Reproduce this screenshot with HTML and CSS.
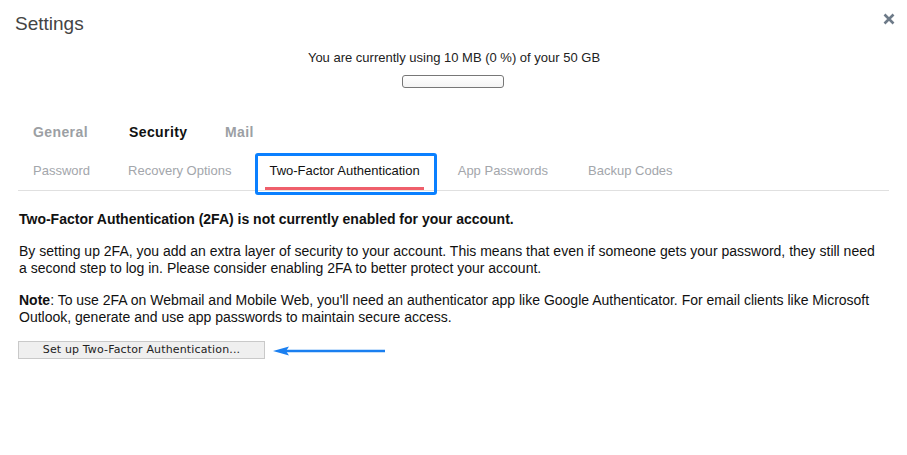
FILE: index.html
```html
<!DOCTYPE html>
<html lang="en">
<head>
<meta charset="utf-8">
<title>Settings</title>
<link rel="stylesheet" href="styles.css">
</head>
<body>
<div class="dialog">
  <header class="header">
    <h1 class="title">Settings</h1>
    <button class="close" aria-label="Close">
      <svg width="12" height="12" viewBox="0 0 12 12"><path d="M1.5 1.5 L10.5 10.5 M10.5 1.5 L1.5 10.5" stroke="#6d7a88" stroke-width="2.6" stroke-linecap="butt" fill="none"/></svg>
    </button>
  </header>

  <section class="usage">
    <div class="usage-text">You are currently using 10 MB (0 %) of your 50 GB</div>
    <div class="usage-bar"></div>
  </section>

  <nav class="tabs">
    <span class="tab">General</span>
    <span class="tab tab-active">Security</span>
    <span class="tab">Mail</span>
  </nav>

  <nav class="subtabs">
    <span class="subtab">Password</span>
    <span class="subtab">Recovery Options</span>
    <span class="subtab subtab-active">Two-Factor Authentication<span class="highlight"></span></span>
    <span class="subtab">App Passwords</span>
    <span class="subtab subtab-last">Backup Codes</span>
  </nav>

  <main class="content">
    <p class="lead">Two-Factor Authentication (2FA) is not currently enabled for your account.</p>
    <p class="text">By setting up 2FA, you add an extra layer of security to your account. This means that even if someone gets your password, they still need a second step to log in. Please consider enabling 2FA to better protect your account.</p>
    <p class="text"><strong class="note">Note</strong>: To use 2FA on Webmail and Mobile Web, you'll need an authenticator app like Google Authenticator. For email clients like Microsoft Outlook, generate and use app passwords to maintain secure access.</p>
    <div class="action-row">
      <button class="setup-btn">Set up Two-Factor Authentication...</button>
      <svg class="arrow" width="113" height="10" viewBox="0 0 113 10"><path d="M12 5 L112 5" stroke="#1a7ff0" stroke-width="2.6" fill="none"/><path d="M0 5 L16 0.5 L13 5 L16 9.5 Z" fill="#1a7ff0"/></svg>
    </div>
  </main>
</div>
</body>
</html>
```

FILE: styles.css
```css
* { box-sizing: border-box; }

html, body {
  margin: 0;
  padding: 0;
  background: #ffffff;
}

body {
  font-family: "Liberation Sans", Arial, sans-serif;
  color: #111;
  width: 907px;
  height: 455px;
  overflow: hidden;
}

.dialog {
  width: 907px;
}

.header {
  display: flex;
  justify-content: space-between;
  align-items: center;
  padding: 13px 11px 0 15px;
  height: 35px;
}

.title {
  margin: 0;
  font-size: 19px;
  line-height: 22px;
  font-weight: normal;
  color: #444;
}

.close {
  border: 0;
  background: none;
  padding: 0;
  width: 14px;
  height: 14px;
  display: flex;
  align-items: center;
  justify-content: center;
  margin-top: -11px;
}

.usage {
  margin-top: 15px;
  display: flex;
  flex-direction: column;
  align-items: center;
}

.usage-text {
  font-size: 13px;
  line-height: 16px;
  color: #222;
  padding-left: 1px;
}

.usage-bar {
  margin-top: 9px;
  width: 102px;
  height: 13px;
  border: 1px solid #777;
  border-radius: 3px;
  background: linear-gradient(#ffffff, #f4f4f4);
  margin-left: -1px;
}

.tabs {
  display: flex;
  margin-top: 35px;
  padding-left: 33px;
}

.tab {
  width: 96px;
  font-size: 14px;
  line-height: 18px;
  font-weight: bold;
  color: #9c9fa4;
  letter-spacing: 0.4px;
}

.tab-active {
  color: #111;
}

.subtabs {
  display: flex;
  gap: 30px;
  margin: 22px 18px 0 18px;
  padding-left: 11px;
  border-bottom: 1px solid #e0e0e0;
}

.subtab {
  position: relative;
  font-size: 13px;
  line-height: 16px;
  color: #a3a6ab;
  padding: 0 4px 8px 4px;
  border-bottom: 3px solid transparent;
}

.subtab-last {
  margin-left: 2px;
}

.subtab-active {
  color: #111;
  border-bottom-color: #ef5f6b;
}

.highlight {
  position: absolute;
  top: -10px;
  left: -10px;
  right: -13px;
  bottom: -8px;
  border: 3px solid #0a80ff;
  border-radius: 3px;
}

.content {
  padding: 20px 22px 0 18px;
}

.content p {
  margin: 0;
  font-size: 14px;
  line-height: 17px;
  color: #111;
}

.content .lead {
  font-weight: bold;
  padding-left: 1px;
}

.content .text {
  margin-top: 15px;
  padding-left: 1px;
}

.note {
  font-weight: bold;
}

.action-row {
  margin-top: 15px;
  display: flex;
  align-items: center;
  gap: 8px;
}

.setup-btn {
  width: 247px;
  height: 18px;
  padding: 0;
  border: 1px solid #c9c9c9;
  background: #efefef;
  font-family: "DejaVu Sans", Verdana, sans-serif;
  font-size: 11px;
  letter-spacing: 0.15px;
  color: #222;
  line-height: 16px;
}

.arrow {
  display: block;
  margin-top: 2px;
}
```
